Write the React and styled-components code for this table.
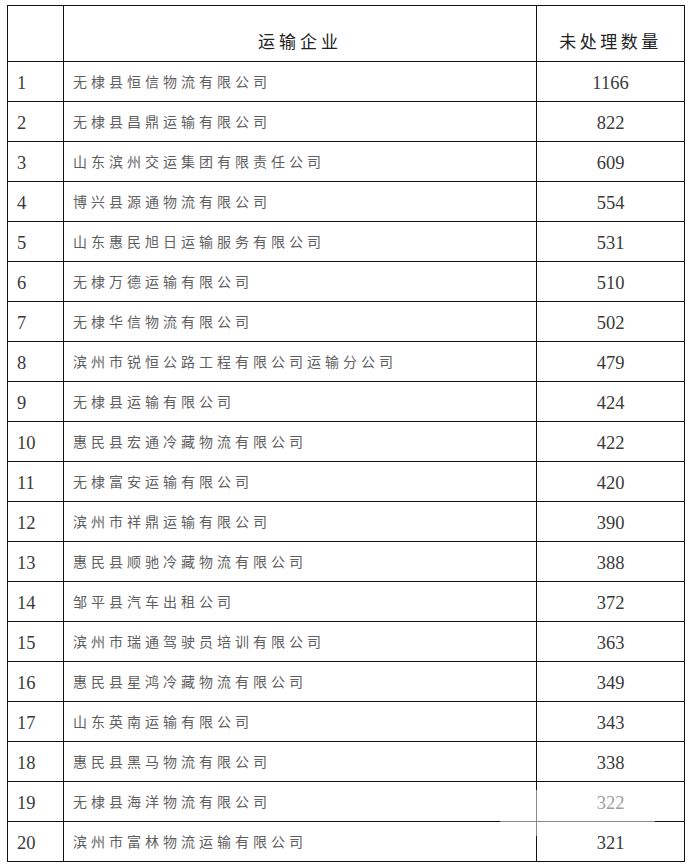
import React from "react";
import styled, { createGlobalStyle } from "styled-components";

const GlobalStyle = createGlobalStyle`
  html, body {
    margin: 0;
    padding: 0;
    background: #fff;
  }
`;

const Page = styled.div`
  position: relative;
  padding: 5px 0 0 7px;
  width: 688px;
  height: 868px;
  box-sizing: border-box;
`;

const Table = styled.table`
  border-collapse: collapse;
  width: 677px;
  table-layout: fixed;
  border: 1.5px solid #111;
`;

const HeadCell = styled.th`
  height: 45px;
  border: 1px solid #111;
  padding: 0 0 10px;
  vertical-align: bottom;
  text-align: center;
  font-family: "Noto Sans CJK SC", "Liberation Serif", serif;
  font-weight: 400;
  font-size: 17px;
  line-height: 20px;
  letter-spacing: ${(p) => p.$spacing || "4px"};
  color: #222;
`;

const Cell = styled.td`
  height: 36px;
  border: 1px solid #111;
  padding: ${(p) => (p.$align === "center" ? "3px 0 0" : "3px 0 0 9px")};
  text-align: ${(p) => p.$align || "left"};
  vertical-align: middle;
  white-space: nowrap;
  overflow: hidden;
`;

const Num = styled.span`
  font-family: "Liberation Serif", "Times New Roman", serif;
  font-size: 18.5px;
  color: #3a3a3a;
`;

const Name = styled.span`
  font-family: "Noto Sans CJK SC", sans-serif;
  font-weight: 400;
  font-size: 14px;
  letter-spacing: 4px;
  color: #5f5f5f;
  vertical-align: 5px;
`;

const Watermark = styled.div`
  position: absolute;
  left: 500px;
  top: 790px;
  width: 155px;
  height: 46px;
  background: rgba(255, 255, 255, 0.5);
`;

const rows = [
  ["无棣县恒信物流有限公司", 1166],
  ["无棣县昌鼎运输有限公司", 822],
  ["山东滨州交运集团有限责任公司", 609],
  ["博兴县源通物流有限公司", 554],
  ["山东惠民旭日运输服务有限公司", 531],
  ["无棣万德运输有限公司", 510],
  ["无棣华信物流有限公司", 502],
  ["滨州市锐恒公路工程有限公司运输分公司", 479],
  ["无棣县运输有限公司", 424],
  ["惠民县宏通冷藏物流有限公司", 422],
  ["无棣富安运输有限公司", 420],
  ["滨州市祥鼎运输有限公司", 390],
  ["惠民县顺驰冷藏物流有限公司", 388],
  ["邹平县汽车出租公司", 372],
  ["滨州市瑞通驾驶员培训有限公司", 363],
  ["惠民县星鸿冷藏物流有限公司", 349],
  ["山东英南运输有限公司", 343],
  ["惠民县黑马物流有限公司", 338],
  ["无棣县海洋物流有限公司", 322],
  ["滨州市富林物流运输有限公司", 321],
];

export default function App() {
  return (
    <Page>
      <GlobalStyle />
      <Table>
        <colgroup>
          <col style={{ width: 56 }} />
          <col style={{ width: 473 }} />
          <col style={{ width: 148 }} />
        </colgroup>
        <thead>
          <tr>
            <HeadCell />
            <HeadCell>运输企业</HeadCell>
            <HeadCell $spacing="3.5px">未处理数量</HeadCell>
          </tr>
        </thead>
        <tbody>
          {rows.map(([name, count], i) => (
            <tr key={name}>
              <Cell>
                <Num>{i + 1}</Num>
              </Cell>
              <Cell>
                <Name>{name}</Name>
              </Cell>
              <Cell $align="center">
                <Num>{count}</Num>
              </Cell>
            </tr>
          ))}
        </tbody>
      </Table>
      <Watermark />
    </Page>
  );
}
